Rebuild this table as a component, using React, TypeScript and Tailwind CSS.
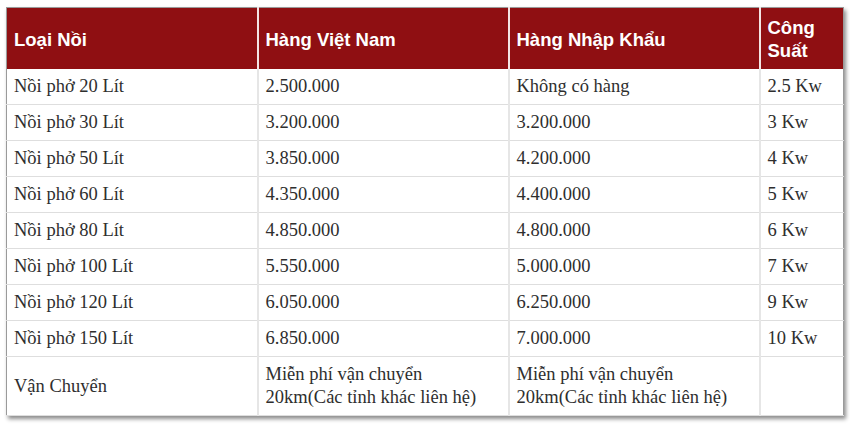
const rows: [string, string, string, string][] = [
  ["Nồi phở 20 Lít", "2.500.000", "Không có hàng", "2.5 Kw"],
  ["Nồi phở 30 Lít", "3.200.000", "3.200.000", "3 Kw"],
  ["Nồi phở 50 Lít", "3.850.000", "4.200.000", "4 Kw"],
  ["Nồi phở 60 Lít", "4.350.000", "4.400.000", "5 Kw"],
  ["Nồi phở 80 Lít", "4.850.000", "4.800.000", "6 Kw"],
  ["Nồi phở 100 Lít", "5.550.000", "5.000.000", "7 Kw"],
  ["Nồi phở 120 Lít", "6.050.000", "6.250.000", "9 Kw"],
  ["Nồi phở 150 Lít", "6.850.000", "7.000.000", "10 Kw"],
];

const th =
  "border-r-2 border-r-[#f4e4e4] last:border-r-0 px-[7px] pt-[8px] pb-[7px] text-left align-middle font-bold";
const td =
  "border-r-2 border-r-[#e6e6e6] last:border-r-0 border-b border-b-[#dedede] px-[7px] py-[6px] align-middle";

export default function App() {
  return (
    <div className="h-[430px] w-[850px] bg-white pl-[6px] pt-[7px]">
      <table className="w-[838px] table-fixed border-collapse border border-[#9a9a9a] bg-white shadow-[2px_3px_4px_rgba(0,0,0,0.45)]">
        <colgroup>
          <col className="w-[251px]" />
          <col className="w-[251px]" />
          <col className="w-[251px]" />
          <col />
        </colgroup>
        <thead>
          <tr className="bg-[#8f0f12] text-white font-['Liberation_Sans',Arial,sans-serif] text-[18.5px] leading-[23px]">
            <th className={th}>Loại Nồi</th>
            <th className={th}>Hàng Việt Nam</th>
            <th className={th}>Hàng Nhập Khẩu</th>
            <th className={th}>
              Công
              <br />
              Suất
            </th>
          </tr>
        </thead>
        <tbody className="font-['Liberation_Serif','Times_New_Roman',serif] text-[18.5px] leading-[23px] text-[#2e2e2e]">
          {rows.map((r) => (
            <tr key={r[0]}>
              {r.map((c, i) => (
                <td key={i} className={td}>
                  {c}
                </td>
              ))}
            </tr>
          ))}
          <tr>
            <td className={td}>Vận Chuyển</td>
            <td className={td}>
              Miễn phí vận chuyển
              <br />
              20km(Các tỉnh khác liên hệ)
            </td>
            <td className={td}>
              Miễn phí vận chuyển
              <br />
              20km(Các tỉnh khác liên hệ)
            </td>
            <td className={td}></td>
          </tr>
        </tbody>
      </table>
    </div>
  );
}
